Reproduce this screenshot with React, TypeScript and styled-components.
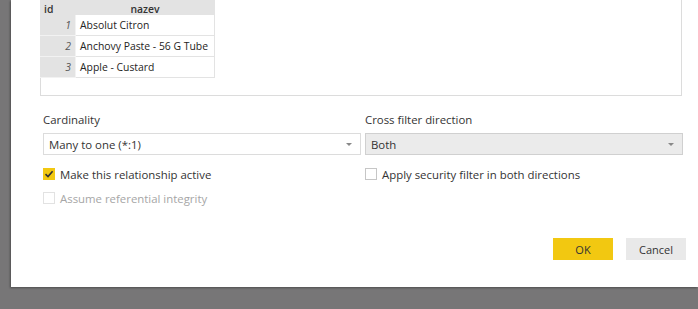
import React, { FC } from 'react';
import styled, { createGlobalStyle } from 'styled-components';

const GlobalStyle = createGlobalStyle`
  html, body {
    margin: 0;
    padding: 0;
    background: #777677;
    font-family: "Open Sans", "Noto Sans", sans-serif;
  }
  #root {
    width: 698px;
    height: 309px;
    overflow: hidden;
  }
`;

const Dialog = styled.div`
  margin-left: 11px;
  width: 687px;
  height: 287px;
  background: #ffffff;
  box-shadow: -1px 1px 2px rgba(0, 0, 0, 0.35);
  display: flex;
  flex-direction: column;
  color: #252423;
  font-size: 11px;
`;

const Preview = styled.div`
  margin-left: 29px;
  width: 642px;
  height: 96px;
  box-sizing: border-box;
  border: 1px solid #dcdcdc;
  border-top: none;
`;

const Table = styled.table`
  border-collapse: collapse;
  table-layout: fixed;
  width: 174px;
  font-size: 10.4px;
  margin-left: -1px;
`;

const HeadCell = styled.th<{ $w: number; $align?: string }>`
  width: ${(p) => p.$w}px;
  height: 14px;
  padding: 0 3px;
  box-sizing: border-box;
  background: #e3e3e3;
  font-weight: 600;
  color: #333;
  text-align: ${(p) => p.$align || 'center'};
  line-height: 10px;
  vertical-align: bottom;
  border: 1px solid #e3e3e3;
  border-top: none;
`;

const IdCell = styled.td`
  height: 21px;
  padding: 0 4px;
  box-sizing: border-box;
  background: #e3e3e3;
  text-align: right;
  font-style: italic;
  color: #555;
  border: 1px solid #f2f2f2;
  border-left-color: #e3e3e3;
`;

const NameCell = styled.td`
  height: 21px;
  padding: 0 4px;
  box-sizing: border-box;
  white-space: nowrap;
  color: #252423;
  border: 1px solid #e3e3e3;
`;

const Form = styled.div`
  padding-left: 32px;
  margin-top: 15px;
`;

const Columns = styled.div`
  display: grid;
  grid-template-columns: 318px 318px;
  column-gap: 4px;
`;

const Field = styled.div`
  display: flex;
  flex-direction: column;
`;

const Label = styled.div`
  font-size: 11.4px;
  color: #333;
  height: 22px;
  line-height: 17px;
`;

const Select = styled.div<{ $disabled?: boolean }>`
  height: 22px;
  box-sizing: border-box;
  border: 1px solid ${(p) => (p.$disabled ? '#d0d0d0' : '#dcdcdc')};
  background: ${(p) => (p.$disabled ? '#ebebeb' : '#ffffff')};
  display: flex;
  align-items: center;
  justify-content: space-between;
  padding: 0 8px 0 5px;
  font-size: 11.4px;
  color: #333;
`;

const Arrow = styled.span`
  width: 0;
  height: 0;
  border-left: 3px solid transparent;
  border-right: 3px solid transparent;
  border-top: 3px solid #888;
`;

const Checks = styled.div`
  display: grid;
  grid-template-columns: 322px 318px;
  grid-auto-rows: 24px;
  margin-top: 7px;
`;

const CheckRow = styled.label<{ $disabled?: boolean }>`
  display: flex;
  align-items: center;
  gap: 5px;
  font-size: 11.4px;
  color: ${(p) => (p.$disabled ? '#a6a6a6' : '#333')};
`;

const Box = styled.span<{ $checked?: boolean; $disabled?: boolean }>`
  width: 12px;
  height: 12px;
  box-sizing: border-box;
  border: 1px solid ${(p) => (p.$checked ? '#f2c811' : p.$disabled ? '#e2e2e2' : '#c6c6c6')};
  background: ${(p) => (p.$checked ? '#f2c811' : '#fff')};
  display: flex;
  align-items: center;
  justify-content: center;
`;

const Buttons = styled.div`
  display: flex;
  gap: 13px;
  margin-top: 28px;
  padding-left: 542px;
`;

const Button = styled.button<{ $primary?: boolean }>`
  width: 60px;
  height: 22px;
  border: none;
  font-family: inherit;
  font-size: 11px;
  color: #333;
  background: ${(p) => (p.$primary ? '#f2c811' : '#e9e9e9')};
  padding: 0;
`;

const Check: FC = () => (
  <svg width="10" height="10" viewBox="0 0 10 10">
    <path d="M1.5 5.2 L4 7.6 L8.6 2.2" fill="none" stroke="#333" strokeWidth="1.6" />
  </svg>
);

const rows = [
  { id: 1, nazev: 'Absolut Citron' },
  { id: 2, nazev: 'Anchovy Paste - 56 G Tube' },
  { id: 3, nazev: 'Apple - Custard' },
];

export default function App() {
  return (
    <>
      <GlobalStyle />
      <Dialog>
        <Preview>
          <Table>
            <thead>
              <tr>
                <HeadCell $w={35} $align="left">id</HeadCell>
                <HeadCell $w={139}>nazev</HeadCell>
              </tr>
            </thead>
            <tbody>
              {rows.map((r) => (
                <tr key={r.id}>
                  <IdCell>{r.id}</IdCell>
                  <NameCell>{r.nazev}</NameCell>
                </tr>
              ))}
            </tbody>
          </Table>
        </Preview>
        <Form>
          <Columns>
            <Field>
              <Label>Cardinality</Label>
              <Select>
                <span>Many to one (*:1)</span>
                <Arrow />
              </Select>
            </Field>
            <Field>
              <Label>Cross filter direction</Label>
              <Select $disabled>
                <span>Both</span>
                <Arrow />
              </Select>
            </Field>
          </Columns>
          <Checks>
            <CheckRow>
              <Box $checked>
                <Check />
              </Box>
              Make this relationship active
            </CheckRow>
            <CheckRow>
              <Box />
              Apply security filter in both directions
            </CheckRow>
            <CheckRow $disabled>
              <Box $disabled />
              Assume referential integrity
            </CheckRow>
          </Checks>
        </Form>
        <Buttons>
          <Button $primary>OK</Button>
          <Button>Cancel</Button>
        </Buttons>
      </Dialog>
    </>
  );
}
